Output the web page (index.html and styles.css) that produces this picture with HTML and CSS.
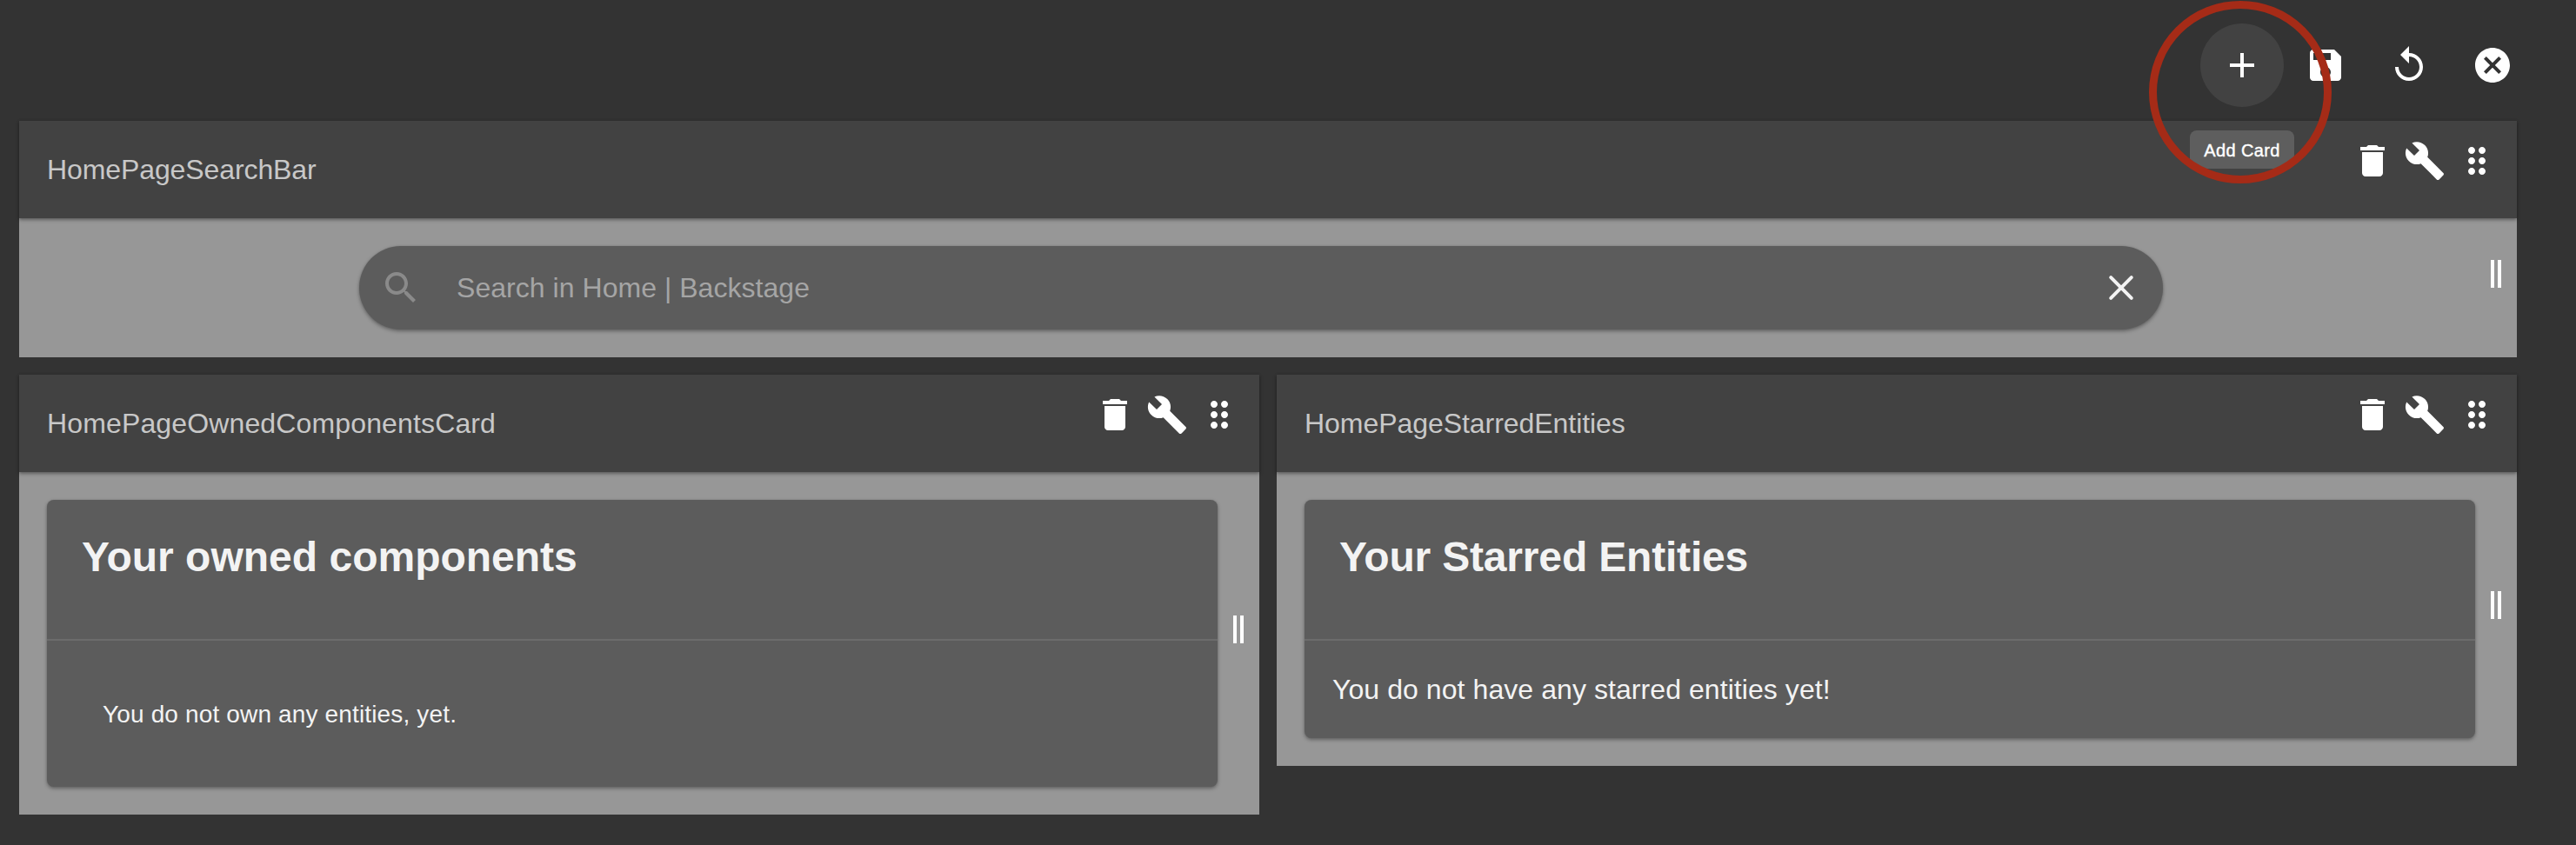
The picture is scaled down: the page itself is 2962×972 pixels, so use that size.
FILE: index.html
```html
<!DOCTYPE html>
<html lang="en">
<head>
<meta charset="utf-8">
<title>Home</title>
<link rel="stylesheet" href="styles.css">
</head>
<body>
<svg class="sprite" aria-hidden="true">
  <symbol id="delete" viewBox="0 0 24 24"><path d="M6 19c0 1.1.9 2 2 2h8c1.1 0 2-.9 2-2V7H6v12zM19 4h-3.5l-1-1h-5l-1 1H5v2h14V4z"/></symbol>
  <symbol id="build" viewBox="0 0 24 24"><path d="M22.7 19l-9.1-9.1c.9-2.3.4-5-1.5-6.9-2-2-5-2.4-7.4-1.3L9 6 6 9 1.6 4.7C.4 7.1.9 10.1 2.9 12.1c1.9 1.9 4.6 2.4 6.9 1.5l9.1 9.1c.4.4 1 .4 1.4 0l2.3-2.3c.5-.4.5-1.1.1-1.4z"/></symbol>
  <symbol id="drag" viewBox="0 0 24 24"><path d="M11 18c0 1.1-.9 2-2 2s-2-.9-2-2 .9-2 2-2 2 .9 2 2zm-2-8c-1.1 0-2 .9-2 2s.9 2 2 2 2-.9 2-2-.9-2-2-2zm0-6c-1.1 0-2 .9-2 2s.9 2 2 2 2-.9 2-2-.9-2-2-2zm6 4c1.1 0 2-.9 2-2s-.9-2-2-2-2 .9-2 2 .9 2 2 2zm0 2c-1.1 0-2 .9-2 2s.9 2 2 2 2-.9 2-2-.9-2-2-2zm0 6c-1.1 0-2 .9-2 2s.9 2 2 2 2-.9 2-2-.9-2-2-2z"/></symbol>
</svg>
<header class="toolbar">
  <button class="tool tool-active" aria-label="Add Card">
    <svg class="icon" viewBox="0 0 24 24"><path d="M19 13h-6v6h-2v-6H5v-2h6V5h2v6h6v2z"/></svg>
    <span class="tooltip">Add Card</span>
    <span class="ring"></span>
  </button>
  <button class="tool" aria-label="Save"><svg class="icon" viewBox="0 0 24 24"><path d="M17 3H5c-1.11 0-2 .9-2 2v14c0 1.1.89 2 2 2h14c1.1 0 2-.9 2-2V7l-4-4zm-5 16c-1.66 0-3-1.34-3-3s1.34-3 3-3 3 1.34 3 3-1.34 3-3 3zm3-10H5V5h10v4z"/></svg></button>
  <button class="tool" aria-label="Restore"><svg class="icon" viewBox="0 0 24 24"><path d="M12 5V1L7 6l5 5V7c3.31 0 6 2.69 6 6s-2.69 6-6 6-6-2.69-6-6H4c0 4.42 3.58 8 8 8s8-3.58 8-8-3.58-8-8-8z"/></svg></button>
  <button class="tool" aria-label="Cancel"><svg class="icon" viewBox="0 0 24 24"><path d="M12 2C6.47 2 2 6.47 2 12s4.47 10 10 10 10-4.47 10-10S17.53 2 12 2zm5 13.59L15.59 17 12 13.41 8.41 17 7 15.59 10.59 12 7 8.41 8.41 7 12 10.59 15.59 7 17 8.41 13.41 12 17 15.59z"/></svg></button>
</header>
<main class="grid">
  <section class="widget widget-wide">
    <div class="widget-head">
      <h2 class="widget-name name-search">HomePageSearchBar</h2>
      <div class="actions"><svg class="icon"><use href="#delete"/></svg><svg class="icon"><use href="#build"/></svg><svg class="icon"><use href="#drag"/></svg></div>
    </div>
    <div class="widget-body search-body">
      <div class="search">
        <svg class="icon search-icon" viewBox="0 0 24 24"><path d="M15.5 14h-.79l-.28-.27C15.41 12.59 16 11.11 16 9.5 16 5.91 13.09 3 9.5 3S3 5.91 3 9.5 5.91 16 9.5 16c1.61 0 3.09-.59 4.23-1.57l.27.28v.79l5 4.99L20.49 19l-4.99-5zm-6 0C7.01 14 5 11.99 5 9.5S7.01 5 9.5 5 14 7.01 14 9.5 11.99 14 9.5 14z"/></svg>
        <span class="placeholder">Search in Home | Backstage</span>
        <svg class="icon clear-icon" viewBox="0 0 24 24"><path d="M6.1 6.1L17.9 17.9M17.9 6.1L6.1 17.9"/></svg>
      </div>
    </div>
    <span class="handle"></span>
  </section>
  <section class="widget">
    <div class="widget-head">
      <h2 class="widget-name name-owned">HomePageOwnedComponentsCard</h2>
      <div class="actions"><svg class="icon"><use href="#delete"/></svg><svg class="icon"><use href="#build"/></svg><svg class="icon"><use href="#drag"/></svg></div>
    </div>
    <div class="widget-body">
      <article class="card">
        <h3 class="card-title">Your owned components</h3>
        <p class="card-text owned-text">You do not own any entities, yet.</p>
      </article>
    </div>
    <span class="handle"></span>
  </section>
  <section class="widget">
    <div class="widget-head">
      <h2 class="widget-name name-starred">HomePageStarredEntities</h2>
      <div class="actions"><svg class="icon"><use href="#delete"/></svg><svg class="icon"><use href="#build"/></svg><svg class="icon"><use href="#drag"/></svg></div>
    </div>
    <div class="widget-body">
      <article class="card">
        <h3 class="card-title starred-title">Your Starred Entities</h3>
        <p class="card-text starred-text">You do not have any starred entities yet!</p>
      </article>
    </div>
    <span class="handle"></span>
  </section>
</main>
</body>
</html>
```

FILE: styles.css
```css
* { box-sizing: border-box; }

body {
  margin: 0;
  height: 972px;
  overflow: hidden;
  background: #333;
  color: #fff;
  font-family: "Liberation Sans", Arial, sans-serif;
}

h2, h3, p { margin: 0; font-weight: 400; }

.sprite { position: absolute; width: 0; height: 0; }

.icon {
  display: block;
  flex: none;
  width: 48px;
  height: 48px;
  fill: currentColor;
}

.toolbar {
  display: flex;
  justify-content: flex-end;
  height: 139px;
  padding: 27px 48px 0 0;
}

.tool {
  position: relative;
  display: flex;
  align-items: center;
  justify-content: center;
  width: 96px;
  height: 96px;
  padding: 0;
  border: 0;
  border-radius: 50%;
  background: none;
  color: #fff;
  font-family: inherit;
}

.tool-active { z-index: 2; background: #424242; }

.tooltip {
  position: absolute;
  top: 123px;
  left: -12px;
  width: 120px;
  height: 44px;
  border-radius: 8px;
  background: #5e5e5e;
  font-size: 20px;
  line-height: 46px;
  letter-spacing: 0.35px;
  text-align: center;
  -webkit-text-stroke: 0.4px #fff;
}

.ring {
  position: absolute;
  top: -26px;
  left: -59px;
  width: 210px;
  height: 210px;
  border: 9px solid #a52b17;
  border-radius: 50%;
}

.grid {
  display: grid;
  grid-template-columns: 1426px 1426px;
  align-items: start;
  gap: 20px;
  padding-left: 22px;
}

.widget { position: relative; background: #979797; }
.widget-wide { grid-column: span 2; }

.widget-head {
  display: flex;
  justify-content: space-between;
  height: 112px;
  padding: 22px 22px 0 32px;
  background: #424242;
  box-shadow: 0 2px 4px rgba(0, 0, 0, 0.35), 0 0 3px rgba(0, 0, 0, 0.15);
}

.widget-name {
  padding-top: 16px;
  color: #c8c8c8;
  font-size: 32px;
  line-height: 36px;
}

.name-search { letter-spacing: -0.1px; }
.name-owned { letter-spacing: 0.14px; }
.name-starred { letter-spacing: -0.05px; }

.actions { display: flex; gap: 12px; }

.widget-body { padding: 32px 48px 32px 32px; }
.search-body { padding: 32px 407px 32px 391px; }

.search {
  display: flex;
  align-items: center;
  height: 96px;
  padding: 0 24px;
  border-radius: 48px;
  background: #5c5c5c;
  box-shadow: 0 2px 4px rgba(0, 0, 0, 0.35), 0 0 2px rgba(0, 0, 0, 0.1);
}

.search-icon { color: #8a8a8a; }

.clear-icon {
  fill: none;
  stroke: #f3f3f3;
  stroke-width: 2;
  stroke-linecap: round;
}

.placeholder {
  flex: 1;
  padding-left: 40px;
  color: #a5a5a5;
  font-size: 32px;
  line-height: 36px;
  letter-spacing: 0.04px;
}

.card {
  border-radius: 8px;
  background: #5c5c5c;
  color: #f3f3f3;
  box-shadow: 0 2px 4px rgba(0, 0, 0, 0.35), 0 0 2px rgba(0, 0, 0, 0.1);
}

.card-title {
  height: 162px;
  padding: 39px 40px 0;
  border-bottom: 2px solid #6c6c6c;
  font-size: 48px;
  font-weight: 700;
  line-height: 54px;
}

.starred-title { letter-spacing: -0.18px; }

.owned-text {
  height: 168px;
  padding: 69px 64px 0;
  font-size: 28px;
  line-height: 32px;
  letter-spacing: 0.15px;
}

.starred-text {
  height: 112px;
  padding: 38px 32px 0;
  font-size: 32px;
  line-height: 36px;
  letter-spacing: 0.07px;
}

.handle {
  position: absolute;
  top: calc(50% + 24px);
  right: 18px;
  width: 12px;
  height: 32px;
  border: solid #fff;
  border-width: 0 4px;
}
```
